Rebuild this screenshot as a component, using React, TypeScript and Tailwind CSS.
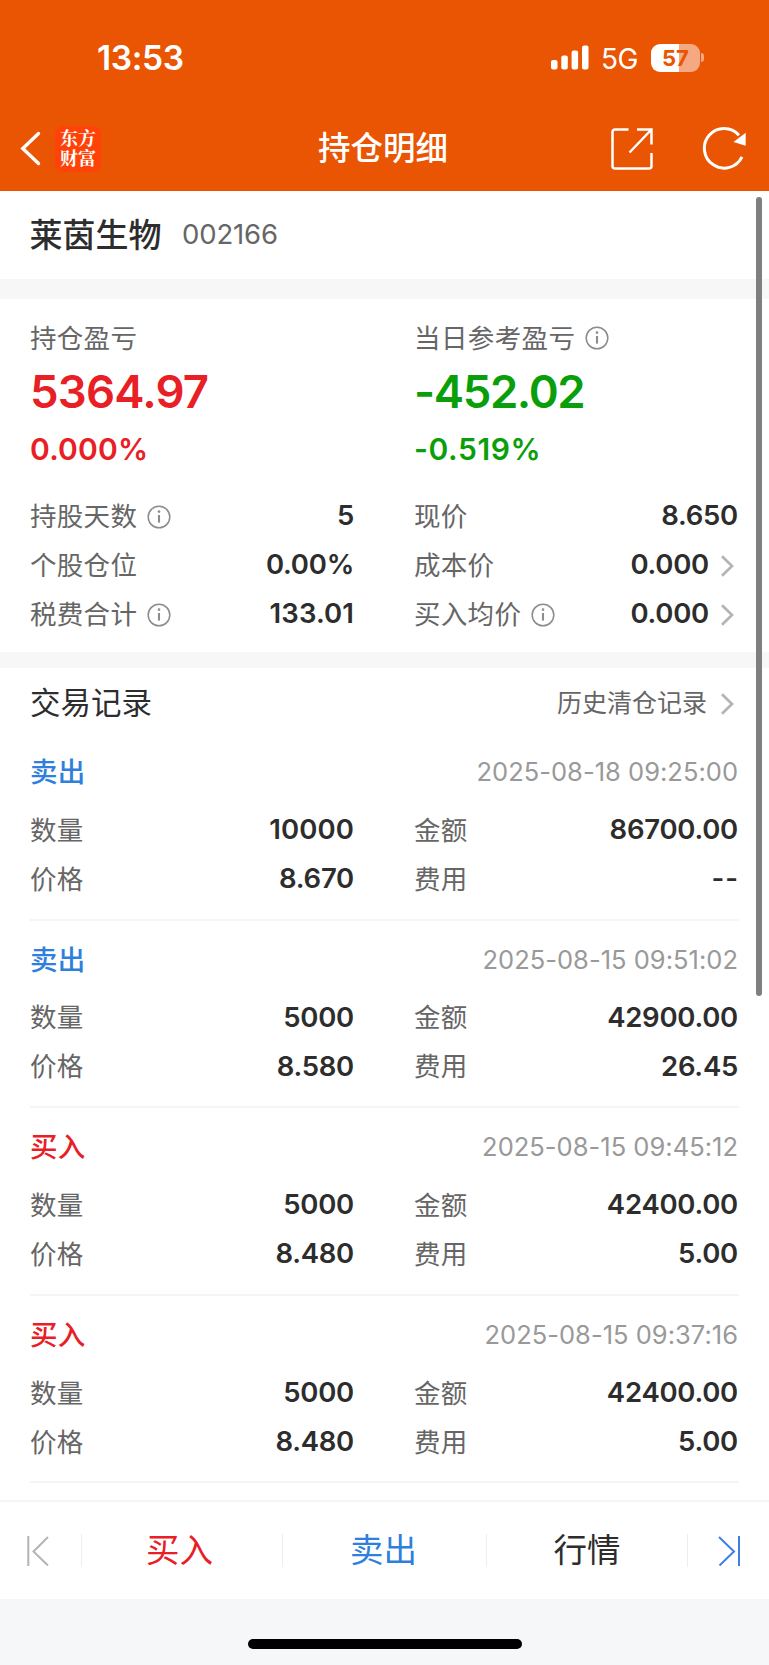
const cn = 'font-["Inter","Noto_Sans_CJK_SC",sans-serif]';

function Info() {
  return (
    <svg className="ml-[9.5px] size-[24px] shrink-0" viewBox="0 0 24 24" fill="none" stroke="#8c8c8c">
      <circle cx="12" cy="12" r="10.8" strokeWidth="1.5" />
      <path d="M12 10v7.6" strokeWidth="2.1" />
      <circle cx="12" cy="6.6" r="1.3" fill="#8c8c8c" stroke="none" />
    </svg>
  );
}

function Chevron() {
  return (
    <svg className="mr-[4px] ml-[12px] h-[22px] w-[13px] shrink-0" viewBox="0 0 13 22" fill="none" stroke="#b4b4b4" strokeWidth="2.7">
      <path d="M1 1.2 11 11 1 20.8" />
    </svg>
  );
}

type CellProps = { label: string; value: string; info?: boolean; link?: boolean };

function valueTracking(value: string) {
  if (value === "--") return "-mr-[1px] tracking-[1px]";
  return value.includes("1") ? "tracking-[0.1px]" : "tracking-[-0.25px]";
}

function Cell({ label, value, info, link }: CellProps) {
  return (
    <div className="flex h-[49px] items-center pr-[1px]">
      <span className="-mt-[1px] text-[26.5px] tracking-[0.3px] text-[#666]">{label}</span>
      {info && <Info />}
      <span className={"ml-auto -mt-[1px] text-[27.5px] font-semibold text-[#2d2d2d] " + valueTracking(value)}>{value}</span>
      {link && <Chevron />}
    </div>
  );
}

type Trade = { side: string; time: string; qty: string; amount: string; price: string; fee: string };

const trades: Trade[] = [
  { side: "卖出", time: "2025-08-18 09:25:00", qty: "10000", amount: "86700.00", price: "8.670", fee: "--" },
  { side: "卖出", time: "2025-08-15 09:51:02", qty: "5000", amount: "42900.00", price: "8.580", fee: "26.45" },
  { side: "买入", time: "2025-08-15 09:45:12", qty: "5000", amount: "42400.00", price: "8.480", fee: "5.00" },
  { side: "买入", time: "2025-08-15 09:37:16", qty: "5000", amount: "42400.00", price: "8.480", fee: "5.00" },
];

const gridCls = "grid grid-cols-[325px_325px] gap-x-[59px]";

function Record({ t }: { t: Trade }) {
  return (
    <div className="mx-[30px] h-[187.6px] border-b-2 border-[#f5f5f5] pt-[17px]">
      <div className="flex h-[44px] items-center justify-between pr-[1px]">
        <span className={(t.side === "卖出" ? "text-[#2f7fdc]" : "text-[#e82025]") + " pt-[2px] text-[27.5px] font-medium tracking-[0.3px]"}>{t.side}</span>
        <span className="text-[25.5px] tracking-[0.02px] text-[#999]">{t.time}</span>
      </div>
      <div className={gridCls + " mt-[12px]"}>
        <Cell label="数量" value={t.qty} />
        <Cell label="金额" value={t.amount} />
        <Cell label="价格" value={t.price} />
        <Cell label="费用" value={t.fee} />
      </div>
    </div>
  );
}

export default function App() {
  return (
    <div className={cn + " relative flex h-[1665px] w-[769px] flex-col overflow-hidden bg-white leading-none"}>
      <header className="h-[191px] shrink-0 bg-[#e95502] text-white">
        <div className="flex h-[115px] items-center pl-[97px]">
          <span className="mt-[2px] text-[33.5px] font-semibold tracking-[-0.4px]">13:53</span>
          <svg className="ml-auto h-[25px] w-[38px]" viewBox="0 0 38 25" fill="#fff">
            <rect x="0" y="15" width="6.5" height="9.5" rx="2" />
            <rect x="10.3" y="10.5" width="6.5" height="14" rx="2" />
            <rect x="20.6" y="5.5" width="6.5" height="19" rx="2" />
            <rect x="31" y="0.5" width="6.5" height="24" rx="2" />
          </svg>
          <span className="mt-[2px] ml-[12px] text-[28px] tracking-[-0.5px]">5G</span>
          <div className="ml-[13px] flex h-[28px] w-[49px] items-center justify-center rounded-[9px] bg-linear-to-r from-white from-57% to-[#f4a983] to-57% text-[22px] font-bold text-[#e95502]">57</div>
          <div className="mr-[65px] ml-[1px] h-[9px] w-[3px] rounded-r-full bg-[#f4a983]" />
        </div>
        <div className="grid h-[68px] grid-cols-[1fr_auto_1fr] items-center">
          <div className="flex items-center pl-[20px]">
            <svg className="h-[36px] w-[21px]" viewBox="0 0 21 36" fill="none" stroke="#fff" strokeWidth="3.4" strokeLinecap="round">
              <path d="M18.5 2.5 2.8 17.5 18.5 32.5" />
            </svg>
            <div className='ml-[14px] flex h-[46px] w-[46px] items-center justify-center rounded-[8px] bg-[#ff4308] pb-[3px] text-center font-["Noto_Serif_CJK_SC","Noto_Sans_CJK_SC",serif] text-[18px] leading-[19.5px] font-bold'>
              东方<br />财富
            </div>
          </div>
          <h1 className="-ml-[3px] pt-[1px] text-[32.5px] font-medium">持仓明细</h1>
          <div className="flex items-center justify-end pr-[23px]">
            <svg className="size-[44px]" viewBox="0 0 44 44" fill="none" stroke="#fff" strokeWidth="2.5">
              <path d="M18.5 2.5H5A2.5 2.5 0 0 0 2.5 5v34A2.5 2.5 0 0 0 5 41.5h34a2.5 2.5 0 0 0 2.5-2.5V26M27 2.5h14.5v15M41 3 19.5 25.5" />
            </svg>
            <svg className="ml-[48px] size-[44px]" viewBox="0 0 44 44" fill="none" stroke="#fff" strokeWidth="3">
              <path d="M40 29.9A19.8 19.8 0 1 1 37 8.2" />
              <path d="M43.7 5.8v13L31.5 15z" fill="#fff" stroke="none" />
            </svg>
          </div>
        </div>
      </header>

      <section className="flex h-[88px] shrink-0 items-center pl-[30px]">
        <h2 className="-ml-[0.5px] text-[33px] font-medium text-[#2d2d2d]">莱茵生物</h2>
        <span className="ml-[20.5px] text-[27.5px] tracking-[-0.15px] text-[#666]">002166</span>
      </section>
      <div className="h-[20px] shrink-0 bg-[#f7f7f8]" />

      <section className="h-[353px] shrink-0 px-[30px] pt-[21px]">
        <div className={gridCls}>
          <div className="text-[#e82025]">
            <div className="flex h-[36px] items-center text-[26.5px] tracking-[0.3px] text-[#666]">持仓盈亏</div>
            <div className="mt-[12px] flex h-[48px] items-center text-[45.5px] font-semibold tracking-[-0.8px]">5364.97</div>
            <div className="mt-[15px] flex h-[36px] items-center text-[30px] font-semibold tracking-[0.2px]">0.000%</div>
          </div>
          <div className="text-[#0a9f0a]">
            <div className="flex h-[36px] items-center text-[26.5px] tracking-[0.4px] text-[#666]">当日参考盈亏<Info /></div>
            <div className="mt-[12px] flex h-[48px] items-center text-[45.5px] font-semibold tracking-[-1.4px]">-452.02</div>
            <div className="mt-[15px] flex h-[36px] items-center text-[30px] font-semibold tracking-[0.6px]">-0.519%</div>
          </div>
        </div>
        <div className={gridCls + " mt-[25px]"}>
          <Cell label="持股天数" value="5" info />
          <Cell label="现价" value="8.650" />
          <Cell label="个股仓位" value="0.00%" />
          <Cell label="成本价" value="0.000" link />
          <Cell label="税费合计" value="133.01" info />
          <Cell label="买入均价" value="0.000" info link />
        </div>
      </section>
      <div className="h-[16px] shrink-0 bg-[#f7f7f7]" />

      <section className="min-h-0 flex-1 overflow-hidden">
        <div className="flex h-[65px] items-center justify-between px-[30px] pt-[6px]">
          <h3 className="text-[30.5px] text-[#2d2d2d]">交易记录</h3>
          <div className="flex items-center pr-[1px] text-[25px] text-[#666]"><span className="mr-[2px]">历史清仓记录</span><Chevron /></div>
        </div>
        {trades.map((t) => <Record key={t.time} t={t} />)}
      </section>

      <nav className="flex h-[99px] shrink-0 items-center border-t-2 border-[#f5f5f5] text-[33.5px]">
        <div className="flex w-[81px] justify-start pl-[26px]">
          <svg className="h-[30px] w-[23px]" viewBox="0 0 23 30" fill="none" stroke="#b4b4b4" strokeWidth="2">
            <path d="M2.3 0v30M22 1 7.5 15.5 22 29.5" />
          </svg>
        </div>
        <div className="flex h-[33px] w-[201px] items-center justify-center border-l border-[#eee] pr-[5px] text-[#e82025]">买入</div>
        <div className="flex h-[33px] w-[204px] items-center justify-center border-l border-[#eee] pr-[2px] text-[#2f7fdc]">卖出</div>
        <div className="flex h-[33px] w-[201px] items-center justify-center border-l border-[#eee] text-[#2d2d2d]">行情</div>
        <div className="flex h-[33px] flex-1 items-center border-l border-[#eee] pl-[30px]">
          <svg className="h-[30px] w-[23px]" viewBox="0 0 23 30" fill="none" stroke="#3f7fe0" strokeWidth="2">
            <path d="M21 0v30M1 1 16 15.5 1.5 29.5" />
          </svg>
        </div>
      </nav>
      <footer className="flex h-[66px] shrink-0 justify-center bg-[#f6f7f9] pt-[40px]">
        <div className="h-[10px] w-[274px] rounded-full bg-black" />
      </footer>
      <div className="absolute top-[197px] left-[756px] h-[799px] w-[6px] rounded-full bg-[#7f7f7f]" />
    </div>
  );
}
